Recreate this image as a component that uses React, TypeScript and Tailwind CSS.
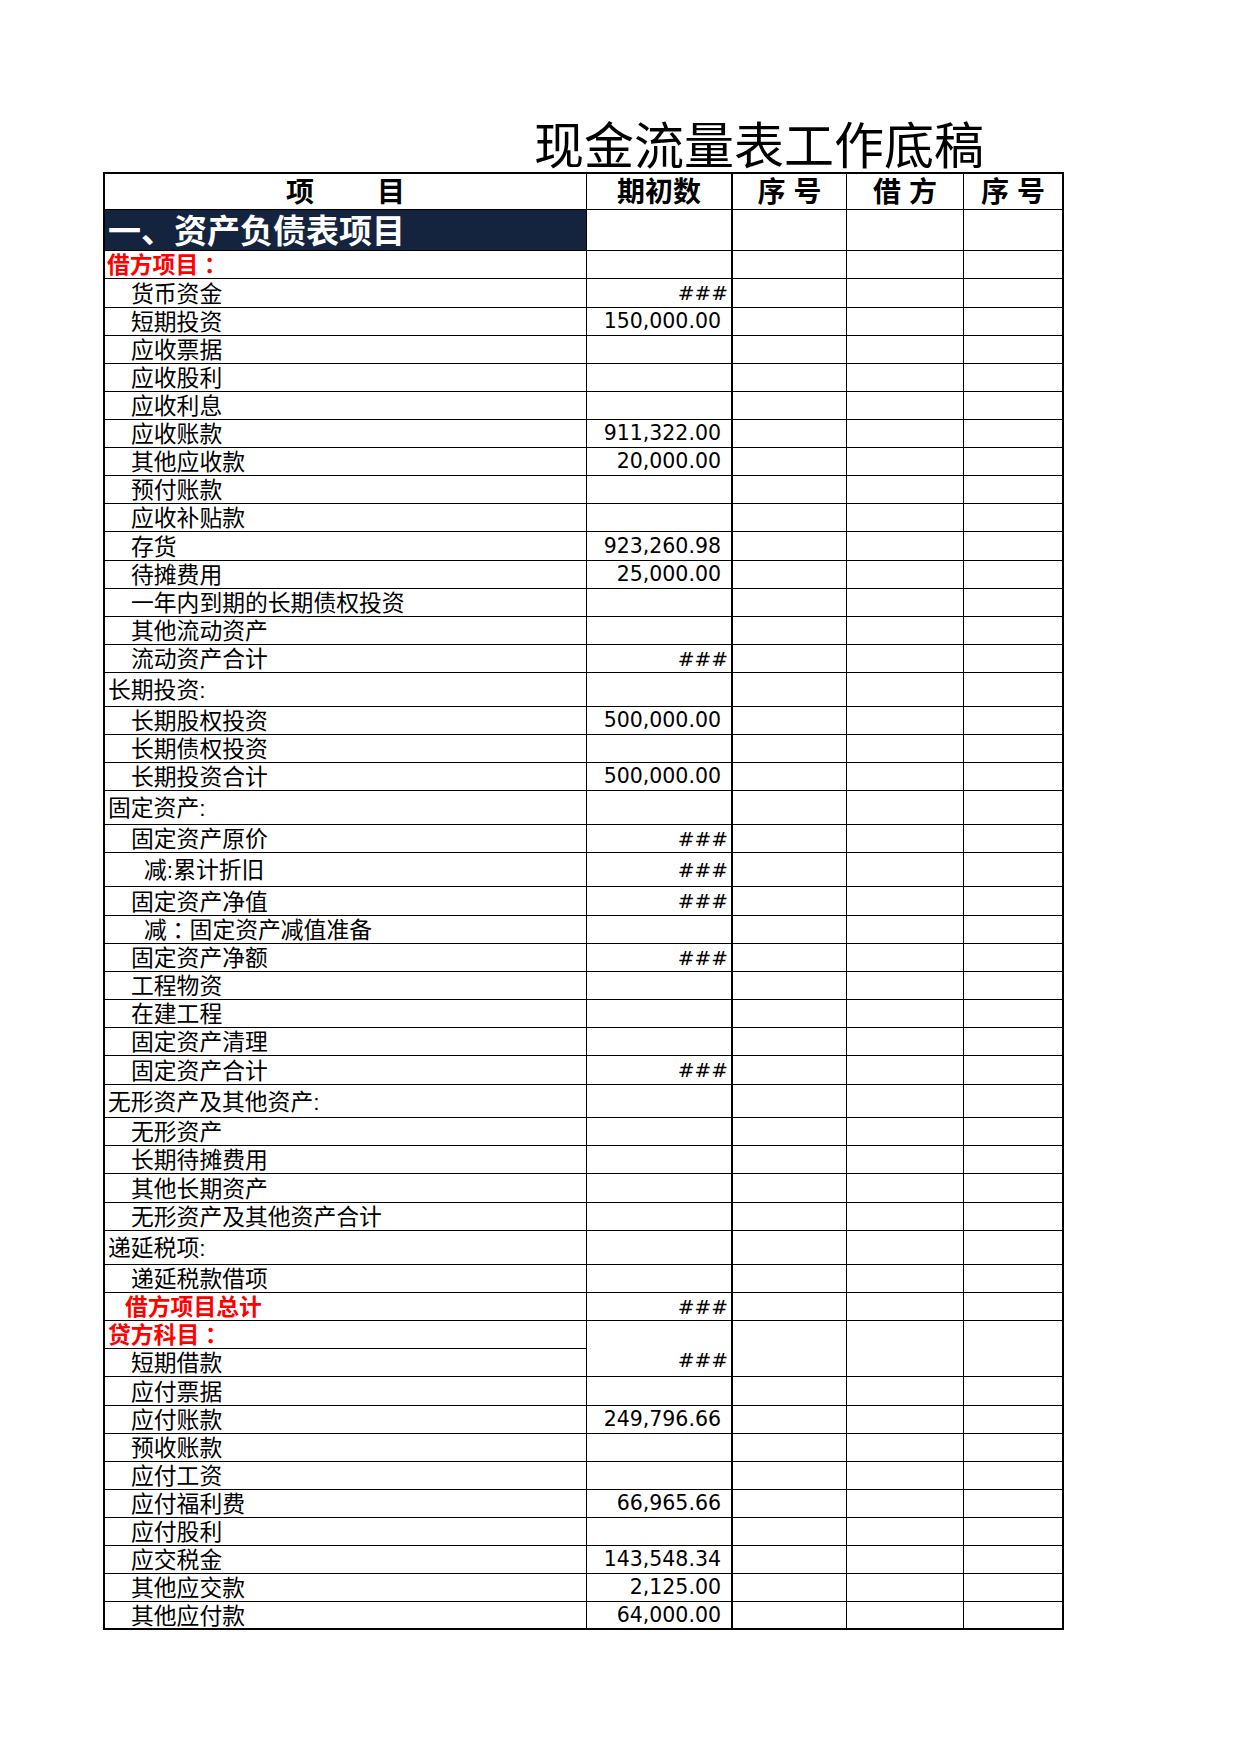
import React from 'react';

// 行类型：决定缩进、颜色和粗细
type Kind = 'sub' | 'head' | 'sub2' | 'redHead' | 'redTotal';

type Row = {
  label: string;
  kind: Kind;
  h: 28 | 29 | 33 | 34;
  value?: string;
};

const HEIGHT: Record<number, string> = {
  28: 'h-[28px]',
  29: 'h-[29px]',
  33: 'h-[33px]',
  34: 'h-[34px]',
};

const LABEL: Record<Kind, string> = {
  sub: 'pl-[26px] text-black',
  head: 'pl-[3px] text-black',
  sub2: 'pl-[39px] text-black',
  redHead: 'pl-[2px] text-[#ff0000] font-bold',
  redTotal: 'pl-[20px] text-[#ff0000] font-bold',
};

const upperRows: Row[] = [
  { label: '借方项目：', kind: 'redHead', h: 28 },
  { label: '货币资金', kind: 'sub', h: 29, value: '###' },
  { label: '短期投资', kind: 'sub', h: 28, value: '150,000.00' },
  { label: '应收票据', kind: 'sub', h: 28 },
  { label: '应收股利', kind: 'sub', h: 28 },
  { label: '应收利息', kind: 'sub', h: 28 },
  { label: '应收账款', kind: 'sub', h: 28, value: '911,322.00' },
  { label: '其他应收款', kind: 'sub', h: 28, value: '20,000.00' },
  { label: '预付账款', kind: 'sub', h: 28 },
  { label: '应收补贴款', kind: 'sub', h: 28 },
  { label: '存货', kind: 'sub', h: 29, value: '923,260.98' },
  { label: '待摊费用', kind: 'sub', h: 28, value: '25,000.00' },
  { label: '一年内到期的长期债权投资', kind: 'sub', h: 28 },
  { label: '其他流动资产', kind: 'sub', h: 28 },
  { label: '流动资产合计', kind: 'sub', h: 28, value: '###' },
  { label: '长期投资:', kind: 'head', h: 34 },
  { label: '长期股权投资', kind: 'sub', h: 28, value: '500,000.00' },
  { label: '长期债权投资', kind: 'sub', h: 28 },
  { label: '长期投资合计', kind: 'sub', h: 28, value: '500,000.00' },
  { label: '固定资产:', kind: 'head', h: 34 },
  { label: '固定资产原价', kind: 'sub', h: 28, value: '###' },
  { label: '减:累计折旧', kind: 'sub2', h: 34, value: '###' },
  { label: '固定资产净值', kind: 'sub', h: 29, value: '###' },
  { label: '减：固定资产减值准备', kind: 'sub2', h: 28 },
  { label: '固定资产净额', kind: 'sub', h: 28, value: '###' },
  { label: '工程物资', kind: 'sub', h: 28 },
  { label: '在建工程', kind: 'sub', h: 28 },
  { label: '固定资产清理', kind: 'sub', h: 28 },
  { label: '固定资产合计', kind: 'sub', h: 29, value: '###' },
  { label: '无形资产及其他资产:', kind: 'head', h: 33 },
  { label: '无形资产', kind: 'sub', h: 28 },
  { label: '长期待摊费用', kind: 'sub', h: 28 },
  { label: '其他长期资产', kind: 'sub', h: 29 },
  { label: '无形资产及其他资产合计', kind: 'sub', h: 28 },
  { label: '递延税项:', kind: 'head', h: 34 },
  { label: '递延税款借项', kind: 'sub', h: 28 },
  { label: '借方项目总计', kind: 'redTotal', h: 28, value: '###' },
];

const lowerRows: Row[] = [
  { label: '应付票据', kind: 'sub', h: 29 },
  { label: '应付账款', kind: 'sub', h: 28, value: '249,796.66' },
  { label: '预收账款', kind: 'sub', h: 28 },
  { label: '应付工资', kind: 'sub', h: 28 },
  { label: '应付福利费', kind: 'sub', h: 28, value: '66,965.66' },
  { label: '应付股利', kind: 'sub', h: 28 },
  { label: '应交税金', kind: 'sub', h: 28, value: '143,548.34' },
  { label: '其他应交款', kind: 'sub', h: 28, value: '2,125.00' },
  { label: '其他应付款', kind: 'sub', h: 28, value: '64,000.00' },
];

const NUM = "font-['DejaVu_Sans',sans-serif]";
const CJK = "font-['Liberation_Sans','Noto_Sans_CJK_SC',sans-serif]";

// 全角冒号居中显示（与原表一致）
function Label({ text }: { text: string }) {
  const parts = text.split('：');
  if (parts.length === 1) return <>{text}</>;
  return (
    <>
      {parts[0]}
      <span className="font-['Noto_Sans_CJK_TC',sans-serif]">：</span>
      {parts[1]}
    </>
  );
}

function Value({ value }: { value?: string }) {
  if (!value) return null;
  if (value === '###') {
    return <span className={`pr-[3px] text-[20px] leading-none ${NUM}`}>###</span>;
  }
  return <span className={`pr-[10px] text-[20.5px] leading-none ${NUM}`}>{value}</span>;
}

function DataRow({ row, last }: { row: Row; last?: boolean }) {
  const bottom = last ? 'border-b-2' : 'border-b';
  const h = HEIGHT[row.h];
  return (
    <>
      <div className={`${h} ${bottom} border-r border-black flex items-center pt-[2px] text-[22.8px] leading-none whitespace-nowrap ${CJK} ${LABEL[row.kind]}`}>
        <Label text={row.label} />
      </div>
      <div className={`${h} ${bottom} border-r-2 border-black flex items-center justify-end`}>
        <Value value={row.value} />
      </div>
      <div className={`${h} ${bottom} border-r border-black`} />
      <div className={`${h} ${bottom} border-r border-black`} />
      <div className={`${h} ${bottom} border-r-2 border-black`} />
    </>
  );
}

export default function App() {
  return (
    <div className={`w-[1240px] min-h-[1754px] bg-white pt-[122px] ${CJK}`}>
      <h1 className="h-[50px] pl-[534px] text-[50px] leading-none font-normal text-black">
        现金流量表工作底稿
      </h1>

      <div className="ml-[103px] w-fit border-t-2 border-l-2 border-black grid grid-cols-[482px_146px_114px_117px_100px]">
        {/* 表头 */}
        <div className="h-[36px] border-r border-b border-black flex items-center justify-center gap-[63px] pt-[3px] text-[28px] font-bold leading-none">
          <span>项</span>
          <span>目</span>
        </div>
        <div className="h-[36px] border-r-2 border-b border-black flex items-center justify-center pt-[3px] text-[28px] font-bold leading-none">
          期初数
        </div>
        <div className="h-[36px] border-r border-b border-black flex items-center justify-center pt-[3px] text-[28px] font-bold leading-none">
          序 号
        </div>
        <div className="h-[36px] border-r border-b border-black flex items-center justify-center pt-[3px] text-[28px] font-bold leading-none">
          借 方
        </div>
        <div className="h-[36px] border-r-2 border-b border-black flex items-center justify-center pt-[3px] text-[28px] font-bold leading-none">
          序 号
        </div>

        {/* 一、资产负债表项目 */}
        <div className="h-[41px] border-r border-b border-black bg-[#14243f] text-white flex items-center pl-[3px] pt-[2px] text-[33px] font-bold leading-none whitespace-nowrap">
          一、资产负债表项目
        </div>
        <div className="h-[41px] border-r-2 border-b border-black" />
        <div className="h-[41px] border-r border-b border-black" />
        <div className="h-[41px] border-r border-b border-black" />
        <div className="h-[41px] border-r-2 border-b border-black" />

        {upperRows.map((row) => (
          <DataRow key={row.label} row={row} />
        ))}

        {/* 贷方科目 + 短期借款：右侧单元格合并 */}
        <div className="h-[28px] border-r border-b border-black flex items-center pl-[3px] pt-[2px] text-[22.8px] leading-none font-bold text-[#ff0000] whitespace-nowrap">
          <Label text="贷方科目：" />
        </div>
        <div className="row-span-2 border-r-2 border-b border-black flex items-end justify-end pb-[6px]">
          <Value value="###" />
        </div>
        <div className="row-span-2 border-r border-b border-black" />
        <div className="row-span-2 border-r border-b border-black" />
        <div className="row-span-2 border-r-2 border-b border-black" />
        <div className="h-[28px] border-r border-b border-black flex items-center pl-[26px] pt-[2px] text-[22.8px] leading-none">
          短期借款
        </div>

        {lowerRows.map((row, i) => (
          <DataRow key={row.label} row={row} last={i === lowerRows.length - 1} />
        ))}
      </div>
    </div>
  );
}
